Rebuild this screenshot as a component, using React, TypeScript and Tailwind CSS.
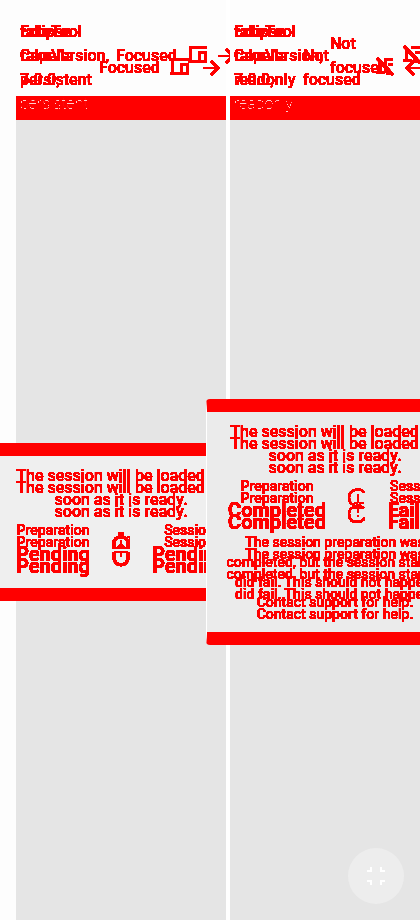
import { ReactNode } from "react";

function Filters() {
  return (
    <svg className="absolute size-0" aria-hidden="true">
      <filter id="crisp" x="0" y="0" width="100%" height="100%">
        <feComponentTransfer>
          <feFuncA type="linear" slope="30" intercept="-1" />
        </feComponentTransfer>
      </filter>
      <filter id="broken" x="0" y="0" width="100%" height="100%">
        <feComponentTransfer>
          <feFuncA type="linear" slope="24" intercept="-12" />
        </feComponentTransfer>
      </filter>
    </svg>
  );
}

function Layers({ items }: { items: string[][] }) {
  return (
    <div className="grid">
      {items.map((lines, i) => (
        <div key={i} className="[grid-area:1/1] whitespace-nowrap">
          {lines.map((l) => (
            <div key={l}>{l}</div>
          ))}
        </div>
      ))}
    </div>
  );
}

function Devices({ off = false, className = "" }: { off?: boolean; className?: string }) {
  return (
    <svg viewBox="0 0 20 20" shapeRendering="crispEdges" className={"size-5 shrink-0 " + className} fill="none" stroke="currentColor" aria-hidden="true">
      {off ? (
        <>
          <path d="M1 1 17 18" strokeWidth="3" shapeRendering="auto" />
          <path d="M3.500 5v10M0 15.500h9M8 2.500h9M11.500 7.500h5M11.500 11v5h5" strokeWidth="3" />
        </>
      ) : (
        <path d="M2.500 16V1.500h16M0 15.500h10M11.500 6.500h6v9h-6z" strokeWidth="3" />
      )}
    </svg>
  );
}

function Arrow({ className = "" }: { className?: string }) {
  return (
    <svg viewBox="0 0 18 18" className={"size-[18px] shrink-0 " + className} fill="none" stroke="currentColor" strokeWidth="2" aria-hidden="true">
      <path d="M0 9h15M8 2l7 7-7 7" />
    </svg>
  );
}

function Doubled({ children, className = "" }: { children: ReactNode; className?: string }) {
  return (
    <div className={"grid " + className}>
      <div className="[grid-area:1/1]">{children}</div>
      <div className="[grid-area:1/1] pt-3" aria-hidden="true">{children}</div>
    </div>
  );
}

function Clock({ ready }: { ready: boolean }) {
  return ready ? (
    <svg viewBox="0 0 18 36" className="h-9 w-[18px] shrink-0" fill="none" stroke="currentColor" strokeWidth="2" aria-hidden="true">
      <path d="M16 5v-1C13 1 9 1 7 2C2 3 1 6 1 10c0 4 2 6 5 7M16 20c-3-2-7-2-10-1-4 1-5 3-5 7 0 5 3 8 8 8 3 0 5-1 7-3v-2M10 6v9M6 15h3v2h3v-2h4M6 20h3v-2h3v2h4M10 20v5M10 27v2" />
    </svg>
  ) : (
    <svg viewBox="0 0 18 36" className="h-9 w-[18px] shrink-0" fill="none" stroke="currentColor" strokeWidth="2" aria-hidden="true">
      <path d="M6 2h6" strokeWidth="4" />
      <path d="M2 17v-6c0-8 14-8 14 0v6M2 20v6c0 9 14 9 14 0v-6" strokeWidth="3" />
      <path d="M1 16h16M2 20h14M9 8v6M6 15l3-2 3 2M9 20v5M15 5h3v3" />
    </svg>
  );
}

function Status({ left, right, ready }: { left: string; right: string; ready: boolean }) {
  return (
    <div className="-mt-1.5 flex items-start justify-center gap-[22px] whitespace-nowrap">
      <Doubled className="text-center text-sm leading-6">
        <div>Preparation</div>
        <div className="text-xl leading-6 font-bold">{left}</div>
      </Doubled>
      <div className="pt-3.5"><Clock ready={ready} /></div>
      <Doubled className="text-center text-sm leading-6">
        <div>Session</div>
        <div className="text-xl leading-6 font-bold">{right}</div>
      </Doubled>
    </div>
  );
}

export default function App() {
  return (
    <main className="relative flex h-screen overflow-hidden bg-[#fdfdfd] pl-4 font-['Roboto',sans-serif] text-base leading-6 font-medium text-[#f00]">
      <Filters />
      <section className="flex w-[210px] shrink-0 flex-col">
        <header className="relative h-24 shrink-0 pt-5 pl-1 [filter:url(#crisp)]">
          <Layers items={[["Eclipse", "Capella", "7.0.0,"], ["fakeTool", "fakeVersion,", "persistent"]]} />
          <span className="absolute top-11 left-[100px]">Focused</span>
          <span className="absolute top-14 left-[83px]">Focused</span>
          <Devices className="absolute top-[46px] left-[172px]" />
          <Devices className="absolute top-[58px] left-[154px]" />
          <Arrow className="absolute top-[59px] left-[187px]" />
        </header>
        <div className="h-6 shrink-0 bg-[#f00] pl-1 leading-4 font-thin text-[#fcc]">
          <div className="[filter:url(#broken)]">persistent</div>
        </div>
        <div className="grow bg-[#e5e5e5]" />
      </section>
      <div className="relative w-1 shrink-0 bg-white">
        <div className="absolute top-[47px] -left-2 w-3 overflow-hidden [filter:url(#crisp)]">
          <Arrow />
        </div>
      </div>
      <section className="flex min-w-0 grow flex-col">
        <header className="relative h-24 shrink-0 overflow-hidden pt-5 pl-1 [filter:url(#crisp)]">
          <Layers items={[["Eclipse", "Capella", "7.0.0,"], ["fakeTool", "fakeVersion,", "readonly"]]} />
          <div className="absolute top-11 left-[73px]">Not<br />focused</div>
          <div className="absolute top-8 left-[100px]">Not<br />focused</div>
          <Devices off className="absolute top-[57px] left-[146px]" />
          <Devices off className="absolute top-[45px] left-[173px]" />
          <Arrow className="absolute top-[59px] left-[174px] rotate-180" />
        </header>
        <div className="h-6 shrink-0 bg-[#f00] pl-1 leading-4 font-thin text-[#fcc]">
          <div className="[filter:url(#broken)]">readonly</div>
        </div>
        <div className="grow bg-[#e5e5e5]" />
      </section>

      <article className="absolute top-[443px] left-0 h-[158px] w-[206px] overflow-hidden border-y-[13px] border-[#f00] bg-[#efefef]">
        <div className="w-[242px] pt-2 [filter:url(#crisp)]">
          <Doubled className="text-center"><p>The session will be loaded as<br />soon as it is ready.</p></Doubled>
          <Status left="Pending" right="Pending" ready={false} />
        </div>
      </article>

      <article className="absolute top-[399px] left-[206px] h-[246px] w-[214px] overflow-hidden rounded-l border-y-[13px] border-l border-y-[#f00] border-l-white bg-[#ebebeb]">
        <div className="w-[256px] pt-2 [filter:url(#crisp)]">
          <Doubled className="text-center"><p>The session will be loaded as<br />soon as it is ready.</p></Doubled>
          <Status left="Completed" right="Failed" ready />
          <Doubled className="-mt-0.5 text-center text-sm leading-5"><p>The session preparation was<br />completed, but the session startup<br />did fail. This should not happen.<br />Contact support for help.</p></Doubled>
        </div>
      </article>

      <button aria-label="Exit fullscreen" className="absolute right-4 bottom-4 grid size-14 place-items-center rounded-full bg-[#ededed] text-white">
        <svg viewBox="0 0 18 18" className="size-[18px]" fill="none" stroke="currentColor" strokeWidth="2">
          <path d="M4 0v4H0M14 0v4h4M0 14h4v4M18 14h-4v4" />
        </svg>
      </button>
    </main>
  );
}
